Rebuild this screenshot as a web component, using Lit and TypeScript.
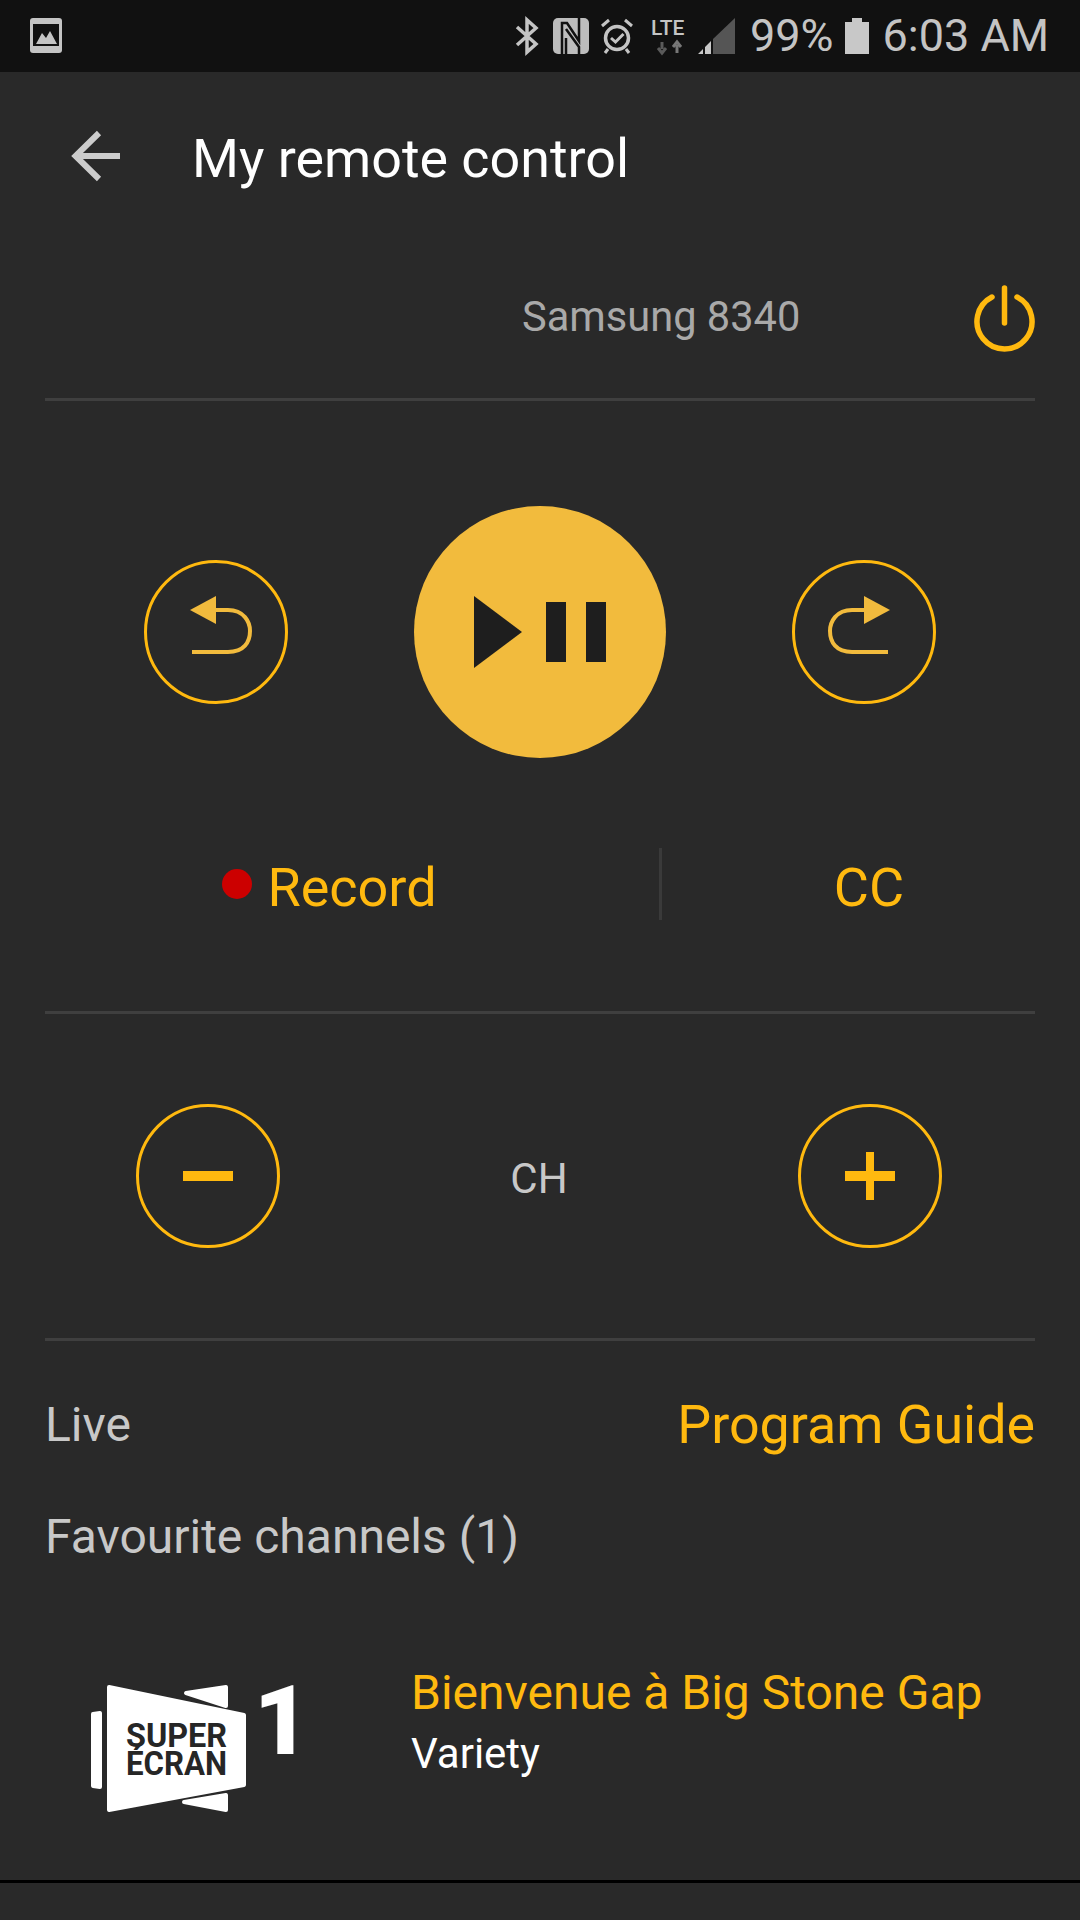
import { LitElement, html, css, svg } from "lit";
import { customElement } from "lit/decorators.js";

@customElement("app-root")
export class AppRoot extends LitElement {
  static styles = css`
    :host { display: block; width: 1080px; height: 1920px; background: #292929; font-family: Roboto, "Liberation Sans", sans-serif; overflow: hidden; }
    svg { display: block; flex: none; overflow: visible; }
    .status { height: 72px; background: #111; display: flex; align-items: center; color: #c4c4c4; padding-left: 30px; box-sizing: border-box; }
    .status .txt { font-size: 45px; line-height: 72px; letter-spacing: 0; }
    .ic1 { margin-left: 453px; }
    .ic2 { margin-left: 14px; }
    .ic3 { margin-left: 12px; }
    .ic4 { margin-left: 18px; }
    .ic5 { margin-left: 10px; }
    .pct { margin-left: 15px; }
    .batt { margin-left: 11px; }
    .clock { margin-left: 14px; }
    .lte { font-size: 21px; font-weight: 500; fill: #c4c4c4; }
    .appbar { height: 168px; display: flex; align-items: center; padding-left: 72px; box-sizing: border-box; }
    .title { margin-left: 72px; font-size: 53.8px; color: #fff; line-height: 60px; margin-top: 6px; }
    .device { height: 161px; margin: 0 45px; display: flex; align-items: flex-start; padding-left: 477px; border-bottom: 3px solid #3f3f3f; box-sizing: border-box; }
    .device .name { font-size: 41.6px; line-height: 48px; color: #a9a9a9; margin-top: 53px; }
    .device .power { margin-left: auto; margin-top: 45px; }
    .transport { height: 447px; display: flex; align-items: center; justify-content: center; gap: 126px; padding-top: 105px; padding-bottom: 90px; box-sizing: border-box; }
    .play { width: 252px; height: 252px; border-radius: 50%; background: #f2bb3d; display: flex; align-items: center; justify-content: center; flex: none; }
    .actions { height: 166px; display: grid; grid-template-columns: 659px 1fr; align-items: start; position: relative; }
    .actions::after { content: ""; position: absolute; left: 45px; right: 45px; bottom: 0; height: 3px; background: #3f3f3f; }
    .act { height: 72px; display: flex; align-items: center; justify-content: center; font-size: 54px; line-height: 60px; color: #ffb90f; box-sizing: border-box; }
    .act span { margin-top: 8px; }
    .record { padding-right: 0; gap: 15px; }
    .dot { width: 30px; height: 30px; border-radius: 50%; background: #cc0000; flex: none; }
    .cc { border-left: 3px solid #3a3a3a; padding-right: 4px; }
    .ch { height: 327px; margin: 0 45px; padding: 90px 93px 0 91px; border-bottom: 3px solid #3f3f3f; box-sizing: border-box; display: flex; justify-content: space-between; align-items: flex-start; }
    .ch .label { font-size: 42px; line-height: 48px; color: #c8c8c8; margin-top: 51px; }
    .guide { margin: 0 45px; padding-top: 54px; display: flex; justify-content: space-between; align-items: flex-start; line-height: 60px; }
    .live { font-size: 48px; color: #c8c8c8; }
    .pg { font-size: 53.8px; color: #ffb90f; }
    .fav { margin: 52px 45px 0; font-size: 48px; line-height: 60px; color: #c8c8c8; }
    .channel { height: 215px; margin-top: 98px; display: flex; align-items: flex-start; box-sizing: border-box; }
    .logo { margin-left: 88px; margin-top: 17px; }
    .logo text { font-family: Roboto, sans-serif; font-weight: 700; font-size: 33px; fill: #262626; }
    .logo .num { font-weight: 900; font-size: 97px; fill: #fff; }
    .info { margin-left: 101px; }
    .prog { font-size: 48px; line-height: 56px; color: #ffb90f; }
    .genre { font-size: 42px; line-height: 48px; color: #fff; margin-top: 9px; }
    .foot { border-top: 3px solid #000; height: 37px; }
  `;

  private round(inner: unknown) {
    return html`<svg width="144" height="144" viewBox="-72 -72 144 144">
      <circle r="70.5" fill="none" stroke="#ffb90f" stroke-width="3"></circle>${inner}
    </svg>`;
  }

  render() {
    return html`
      <div class="status">
        <svg width="32" height="36" viewBox="0 0 32 36">
          <rect width="32" height="35" rx="3" fill="#c4c4c4"></rect>
          <rect x="3" y="6" width="26" height="22" fill="#111"></rect>
          <path d="M6 26 L12 15 L16 20 L20 13 L27 26 Z" fill="#c4c4c4"></path>
        </svg>
        <svg class="ic1" width="24" height="36" viewBox="0 0 24 36">
          <path d="M2 9 L21 26 L12 34 V2 L21 10 L2 27" fill="none" stroke="#c4c4c4" stroke-width="3.5"></path>
        </svg>
        <svg class="ic2" width="36" height="36" viewBox="0 0 36 36">
          <rect width="36" height="36" rx="5" fill="#bdbdbd"></rect>
          <path d="M9 36 V5 H14 L26 23 V0 M26 36 V29 L13 11" fill="none" stroke="#111" stroke-width="2.5"></path>
          <path d="M13 36 V20" fill="none" stroke="#111" stroke-width="2.5"></path>
        </svg>
        <svg class="ic3" width="32" height="36" viewBox="0 0 32 36">
          <circle cx="16" cy="20" r="11.5" fill="none" stroke="#c4c4c4" stroke-width="3.5"></circle>
          <path d="M10 20 L14.5 24 L22.5 16" fill="none" stroke="#c4c4c4" stroke-width="3"></path>
          <path d="M1 8 L8 2 M31 8 L24 2 M7 31 L4 35 M25 31 L28 35" fill="none" stroke="#c4c4c4" stroke-width="3"></path>
        </svg>
        <svg class="ic4" width="37" height="36" viewBox="0 0 37 36">
          <text class="lte" x="0" y="17">LTE</text>
          <path d="M11 24 V31 M7 30 L11 35 L15 30" fill="none" stroke="#5a5a5a" stroke-width="3"></path>
          <path d="M26 35 V27 M22 29 L26 24 L30 29" fill="none" stroke="#777" stroke-width="3"></path>
        </svg>
        <svg class="ic5" width="37" height="36" viewBox="0 0 37 36">
          <path d="M15 21 L37 0 V36 H15 Z" fill="#555"></path>
          <path d="M0 36 L5 31 V36 Z M7 29 L13 23 V36 H7 Z" fill="#c8c8c8"></path>
        </svg>
        <span class="txt pct">99%</span>
        <svg class="batt" width="24" height="36" viewBox="0 0 24 36">
          <path d="M7 0 H17 V4 H24 V36 H0 V4 H7 Z" fill="#c8c8c8"></path>
        </svg>
        <span class="txt clock">6:03 AM</span>
      </div>

      <div class="appbar">
        <svg width="48" height="48" viewBox="0 0 48 48">
          <path d="M27 1 L3.5 24 L27 47" fill="none" stroke="#ccc" stroke-width="6"></path>
          <path d="M4 24 H48" fill="none" stroke="#ccc" stroke-width="6"></path>
        </svg>
        <div class="title">My remote control</div>
      </div>

      <div class="device">
        <div class="name">Samsung 8340</div>
        <svg class="power" width="61" height="68" viewBox="0 0 61 68">
          <path d="M18 12 A27.5 27.5 0 1 0 43 12" fill="none" stroke="#ffb90f" stroke-width="5.5" stroke-linecap="round"></path>
          <path d="M30.5 3 V38" fill="none" stroke="#ffb90f" stroke-width="5.5" stroke-linecap="round"></path>
        </svg>
      </div>

      <div class="transport">
        ${this.round(svg`
          <path d="M-26 -22 L0 -36 V-8 Z" fill="#f2bb3d"></path>
          <path d="M-2 -22 H12 C28 -22 34 -10 34 -1 C34 10 28 20 12 20 H-24" fill="none" stroke="#f2bb3d" stroke-width="4"></path>
        `)}
        <div class="play">
          <svg width="133" height="72" viewBox="0 0 133 72">
            <path d="M0 0 L48 36 L0 72 Z" fill="#1e1e1e"></path>
            <rect x="72" y="6" width="20" height="60" fill="#1e1e1e"></rect>
            <rect x="112" y="6" width="20" height="60" fill="#1e1e1e"></rect>
          </svg>
        </div>
        ${this.round(svg`
          <path d="M26 -22 L0 -36 V-8 Z" fill="#f2bb3d"></path>
          <path d="M2 -22 H-12 C-28 -22 -34 -10 -34 -1 C-34 10 -28 20 -12 20 H24" fill="none" stroke="#f2bb3d" stroke-width="4"></path>
        `)}
      </div>

      <div class="actions">
        <div class="act record"><div class="dot"></div><span>Record</span></div>
        <div class="act cc"><span>CC</span></div>
      </div>

      <div class="ch">
        ${this.round(svg`<rect x="-25" y="-5" width="50" height="10" fill="#ffb90f"></rect>`)}
        <div class="label">CH</div>
        ${this.round(svg`<rect x="-25" y="-5" width="50" height="10" fill="#ffb90f"></rect><rect x="-4" y="-24" width="8" height="48" fill="#ffb90f"></rect>`)}
      </div>

      <div class="guide">
        <div class="live">Live</div>
        <div class="pg">Program Guide</div>
      </div>
      <div class="fav">Favourite channels (1)</div>

      <div class="channel">
        <svg class="logo" width="222" height="133" viewBox="88 1682 222 133">
          <g fill="#fff" stroke="#fff" stroke-width="4" stroke-linejoin="round">
            <path d="M93 1714 L100 1713 V1787 L93 1786 Z"></path>
            <path d="M109 1687 L244 1715 V1785 L109 1810 Z"></path>
            <path d="M186 1693 L226 1687 V1706 Z"></path>
            <path d="M184 1802 L226 1795 V1810 Z"></path>
          </g>
          <text x="126" y="1747" textLength="101" lengthAdjust="spacingAndGlyphs">SUPER</text>
          <text x="126" y="1775" textLength="101" lengthAdjust="spacingAndGlyphs">ÉCRAN</text>
          <text class="num" x="310" y="1754" text-anchor="end">1</text>
        </svg>
        <div class="info">
          <div class="prog">Bienvenue à Big Stone Gap</div>
          <div class="genre">Variety</div>
        </div>
      </div>
      <div class="foot"></div>
    `;
  }
}
